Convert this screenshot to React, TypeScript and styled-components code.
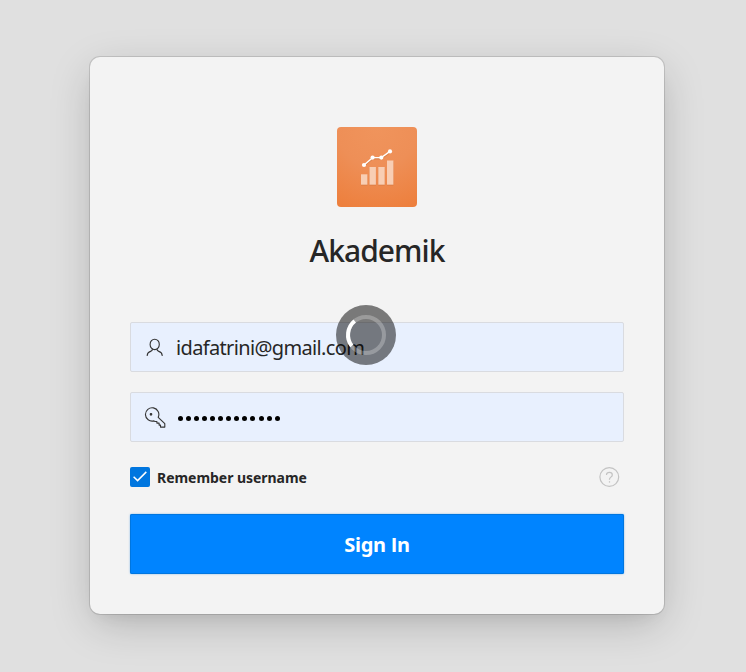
import React from "react";
import styled, { createGlobalStyle } from "styled-components";

const GlobalStyle = createGlobalStyle`
  *, *::before, *::after { box-sizing: border-box; }
  html, body { margin: 0; background: #e0e0e0; }
  body { font-family: "Noto Sans", "Open Sans", sans-serif; color: #262626; }
`;

const Page = styled.main`
  display: flex;
  justify-content: center;
  align-items: flex-start;
  width: 746px;
  height: 672px;
  padding: 57px 0 0 8px;
  overflow: hidden;
`;

const Card = styled.form`
  display: flex;
  flex-direction: column;
  width: 574px;
  height: 557px;
  padding: 70px 40px 40px;
  border-radius: 10px;
  background: #f3f3f3;
  box-shadow: 0 0 0 1px rgba(0, 0, 0, 0.12), 0 12px 44px -4px rgba(0, 0, 0, 0.22),
    0 8px 16px -8px rgba(0, 0, 0, 0.08);
`;

const Logo = styled.div`
  width: 80px;
  height: 80px;
  align-self: center;
  border-radius: 4px;
  overflow: hidden;
  background: radial-gradient(circle at 50% 0, #f0945c 0%, #ee8f57 45%, #ed7e3b 100%);
  svg { display: block; }
`;

const Title = styled.h1`
  margin: 24px 0 51px;
  height: 40px;
  line-height: 40px;
  text-align: center;
  white-space: nowrap;
  font-size: 30px;
  font-weight: 500;
  letter-spacing: -0.95px;
`;

const Field = styled.label`
  display: flex;
  align-items: center;
  height: 50px;
  margin-bottom: 20px;
  border: 1px solid #d9dbe0;
  border-radius: 2px;
  background: #e8f0fe;
  padding-left: 13px;
  svg { flex: none; margin-top: 1px; }
`;

const Value = styled.span`
  margin: 2px 0 0 10px;
  font-size: 20px;
  line-height: 28px;
  white-space: nowrap;
  letter-spacing: -0.65px;
`;

const Dots = styled.span`
  display: flex;
  gap: 3.12px;
  margin: 2px 0 0 11.5px;
`;

const Dot = styled.i`
  width: 5px;
  height: 5px;
  border-radius: 50%;
  background: #000;
`;

const Options = styled.div`
  display: flex;
  align-items: center;
  height: 20px;
  margin: 5px 4px 27px 0;
`;

const Checkbox = styled.span`
  width: 20px;
  height: 20px;
  border-radius: 2px;
  background: #0076df;
  svg { display: block; }
`;

const CheckLabel = styled.span`
  margin: 1px 0 0 7px;
  flex: 1;
  font-size: 14px;
  line-height: 20px;
  font-weight: 700;
  letter-spacing: -0.04px;
  white-space: nowrap;
`;

const SignIn = styled.button`
  height: 60px;
  border: 0;
  border-radius: 2px;
  background: #0084ff;
  box-shadow: inset 0 0 0 1px #0076df, 0 0 2px rgba(0, 118, 223, 0.5);
  color: #fff;
  font: 700 20px/28px "Noto Sans", "Open Sans", sans-serif;
  letter-spacing: -0.25px;
  padding: 2px 0 0;
`;

const CapitalI = styled.span`
  font-family: "Open Sans", sans-serif;
`;

const Spinner = styled.div`
  position: fixed;
  left: 336px;
  top: 305px;
  width: 60px;
  height: 60px;
  border-radius: 50%;
  background: rgba(0, 0, 0, 0.5);
  svg { display: block; }
`;

const bars = [
  { x: 24, y: 47.3, h: 10.4 },
  { x: 32.5, y: 40, h: 17.7 },
  { x: 41.3, y: 40, h: 17.7 },
  { x: 50, y: 33.5, h: 24.2 },
];

const points = [[27, 38], [35.6, 30.6], [44.3, 30.6], [53, 24.4]];

const ChartLogo = () => (
  <svg width="80" height="80" viewBox="0 0 80 80">
    <g fill="#8d4a20" opacity="0.22">
      {bars.map((b) => <rect key={b.x} x={b.x} y={b.y + 0.8} width="6.4" height={b.h} />)}
      <path d="M27 39 35.6 31.6H44.3L53 25.4" fill="none" stroke="#8d4a20" strokeWidth="1.6" />
    </g>
    {bars.map((b) => <rect key={b.x} x={b.x} y={b.y} width="6.4" height={b.h} fill="#f8ceb4" />)}
    <path d="M27 38 35.6 30.6H44.3L53 24.4" fill="none" stroke="#fff" strokeWidth="1.4" />
    {points.map(([x, y]) => <circle key={x} cx={x} cy={y} r="2.1" fill="#fff" />)}
  </svg>
);

const UserIcon = () => (
  <svg width="22" height="22" viewBox="0 0 22 22" fill="none" stroke="#333" strokeWidth="1.1" strokeLinecap="round">
    <ellipse cx="10.7" cy="7.4" rx="4.6" ry="5.2" />
    <path d="M8.4 12c.2 1.5-.5 2-1.8 2.4-2.2.7-3.3 1.6-3.4 4M13 12c-.2 1.5.5 2 1.8 2.4 2.2.7 3.3 1.6 3.4 4" />
  </svg>
);

const KeyIcon = () => (
  <svg width="22" height="22" viewBox="0 0 22 22" fill="none" stroke="#333" strokeWidth="1.1" strokeLinejoin="round">
    <path d="M14.2 10.3A6.7 6.7 0 1 0 9.9 13.9l1.2.6h1.8v1.6h2.2v2h1.4v2H20.8v-3.4Z" />
    <circle cx="7" cy="7.3" r="0.8" fill="#333" />
  </svg>
);

const HelpIcon = () => (
  <svg width="21" height="20" viewBox="0 0 21 20" fill="none" stroke="#c3c3c3" strokeWidth="1.2">
    <circle cx="10.3" cy="10" r="9.4" />
    <path d="M7.5 8c0-1.6 1.1-2.7 2.9-2.7 1.7 0 2.9 1 2.9 2.6 0 2.2-2.8 2.3-2.8 4.4v.5" />
    <path d="M10.5 14.2v1.4" />
  </svg>
);

export default function App() {
  return (
    <>
      <GlobalStyle />
      <Page>
        <Card>
          <Logo><ChartLogo /></Logo>
          <Title>Akademik</Title>
          <Field>
            <UserIcon />
            <Value>idafatrini@gmail.com</Value>
          </Field>
          <Field>
            <KeyIcon />
            <Dots>{Array.from({ length: 13 }, (_, i) => <Dot key={i} />)}</Dots>
          </Field>
          <Options>
            <Checkbox>
              <svg width="20" height="20" viewBox="0 0 20 20" fill="none" stroke="#fff" strokeWidth="1.5">
                <path d="M3.6 9.7 7.6 13.6 16.3 4.9" />
              </svg>
            </Checkbox>
            <CheckLabel>Remember username</CheckLabel>
            <HelpIcon />
          </Options>
          <SignIn type="button">Sign <CapitalI>I</CapitalI>n</SignIn>
        </Card>
      </Page>
      <Spinner>
        <svg width="60" height="60" viewBox="0 0 60 60" fill="none" strokeWidth="4">
          <circle cx="30" cy="30" r="18" stroke="#fff" strokeOpacity="0.25" />
          <path d="M18.7 16A18 18 0 0 0 15.8 41" stroke="#fff" />
        </svg>
      </Spinner>
    </>
  );
}
